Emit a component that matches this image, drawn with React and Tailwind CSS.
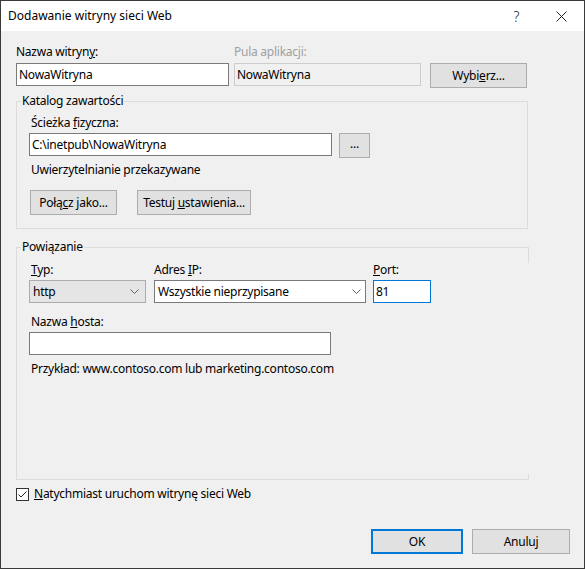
import React from 'react';

const font = { fontFamily: '"Noto Sans", "Open Sans", sans-serif' };

const Chevron = () => (
  <svg width="9" height="5" viewBox="0 0 9 5" className="shrink-0">
    <path d="M0.5 0.5 L4.5 4.5 L8.5 0.5" fill="none" stroke="#606060" strokeWidth="1" />
  </svg>
);

const Btn = ({ className = '', children }) => (
  <button className={`h-[25px] bg-[#e1e1e1] border border-[#adadad] text-[12px] text-black flex items-center justify-center ${className}`}>
    <span>{children}</span>
  </button>
);

const Label = ({ className = '', children }) => (
  <div className={`h-[16px] leading-[16px] text-[12px] ${className}`}>{children}</div>
);

const Group = ({ title, className = '', children }) => (
  <div className={`relative border-[#dcdcdc] ${className}`}>
    <span className="absolute -top-[9px] left-[4px] px-[1px] bg-[#f0f0f0] text-[12px] leading-[16px]">{title}</span>
    {children}
  </div>
);

export default function App() {
  return (
    <div style={font} className="w-[585px] h-[569px] border border-[#3a3a3a] bg-[#f0f0f0] flex flex-col text-black text-[12px]">
      {/* title bar */}
      <div className="h-[30px] bg-white flex items-center shrink-0">
        <div className="pl-[7px] flex-1 text-[12px]">Dodawanie witryny sieci Web</div>
        <div className="w-[46px] h-full flex items-center justify-center pl-[3px] text-[14px] font-light text-[#222]">?</div>
        <div className="w-[46px] h-full flex items-center justify-center">
          <svg width="11" height="11" viewBox="0 0 11 11">
            <path d="M0.5 0.5 L10.5 10.5 M10.5 0.5 L0.5 10.5" stroke="#222" strokeWidth="1" />
          </svg>
        </div>
      </div>

      <div className="flex-1 flex flex-col px-[15px] tracking-[-0.25px]">
        {/* site name row */}
        <div className="flex mt-[13px]">
          <div className="w-[213px]">
            <Label className="mb-[3px]">Nazwa witryn<u>y</u>:</Label>
            <div className="h-[23px] bg-white border border-[#7a7a7a] flex items-center px-[2px]">NowaWitryna</div>
          </div>
          <div className="w-[187px] ml-[5px]">
            <Label className="mb-[3px] text-[#a0a0a0]">Pula aplikacji:</Label>
            <div className="h-[23px] bg-[#f0f0f0] border border-[#cccccc] flex items-center px-[2px]">NowaWitryna</div>
          </div>
          <Btn className="w-[97px] ml-[9px] mt-[19px]">Wybi<u>e</u>rz...</Btn>
        </div>

        {/* content directory */}
        <Group title="Katalog zawartości" className="border w-[512px] h-[128px] mt-[13px] pl-[12px] pt-[13px]">
          <Label className="mb-[2px] pl-[2px]">Ścieżka <u>f</u>izyczna:</Label>
          <div className="flex">
            <div className="w-[303px] h-[23px] bg-white border border-[#7a7a7a] flex items-center px-[2px]">C:\inetpub\NowaWitryna</div>
            <Btn className="w-[31px] ml-[7px] pb-[4px]">...</Btn>
          </div>
          <Label className="mt-[4px] pl-[2px]">Uwierzytelnianie przekazywane</Label>
          <div className="flex mt-[12px] ml-[1px]">
            <Btn className="w-[87px]">Połą<u>c</u>z jako...</Btn>
            <Btn className="w-[114px] ml-[20px]">Testuj <u>u</u>stawienia...</Btn>
          </div>
        </Group>

        {/* binding */}
        <Group title="Powiązanie" className="border-l border-t border-b w-[512px] h-[233px] mt-[18px] pl-[12px] pt-[14px]">
          <div className="absolute -right-[1px] -top-[1px] w-[1px] h-[16px] bg-[#dcdcdc]" />
          <div className="absolute -right-[1px] -bottom-[1px] w-[1px] h-[6px] bg-[#dcdcdc]" />
          <div className="flex">
            <div className="w-[117px]">
              <Label className="mb-[2px] pl-[2px]"><u>T</u>yp:</Label>
              <div className="h-[23px] bg-[#e5e5e5] border border-[#acacac] flex items-center justify-between pl-[3px] pr-[6px]">
                <span>http</span>
                <Chevron />
              </div>
            </div>
            <div className="w-[212px] ml-[8px]">
              <Label className="mb-[2px]">Adres <u>I</u>P:</Label>
              <div className="h-[23px] bg-white border border-[#7a7a7a] flex items-center justify-between pl-[3px] pr-[4px]">
                <span>Wszystkie nieprzypisane</span>
                <Chevron />
              </div>
            </div>
            <div className="w-[58px] ml-[7px]">
              <Label className="mb-[2px]"><u>P</u>ort:</Label>
              <div className="h-[23px] bg-white border border-[#0078d7] flex items-center px-[2px]">81</div>
            </div>
          </div>
          <Label className="mt-[11px] mb-[2px] pl-[2px]">Nazwa <u>h</u>osta:</Label>
          <div className="w-[302px] h-[23px] bg-white border border-[#7a7a7a]" />
          <Label className="mt-[6px] pl-[2px]">Przykład: www.contoso.com lub marketing.contoso.com</Label>
        </Group>

        {/* start checkbox */}
        <div className="flex items-center h-[16px] mt-[6px]">
          <svg width="13" height="13" viewBox="0 0 13 13" className="shrink-0">
            <rect x="0.5" y="0.5" width="12" height="12" fill="white" stroke="#333" />
            <path d="M2.5 6.5 L5 9 L10.5 3.5" fill="none" stroke="#222" strokeWidth="1" />
          </svg>
          <span className="ml-[5px]"><u>N</u>atychmiast uruchom witrynę sieci Web</span>
        </div>

        {/* dialog buttons */}
        <div className="mt-auto mb-[14px] flex justify-end -mr-[1px]">
          <Btn className="w-[92px] !border-2 !border-[#0078d7]">OK</Btn>
          <Btn className="w-[98px] ml-[9px]">Anuluj</Btn>
        </div>
      </div>
    </div>
  );
}
